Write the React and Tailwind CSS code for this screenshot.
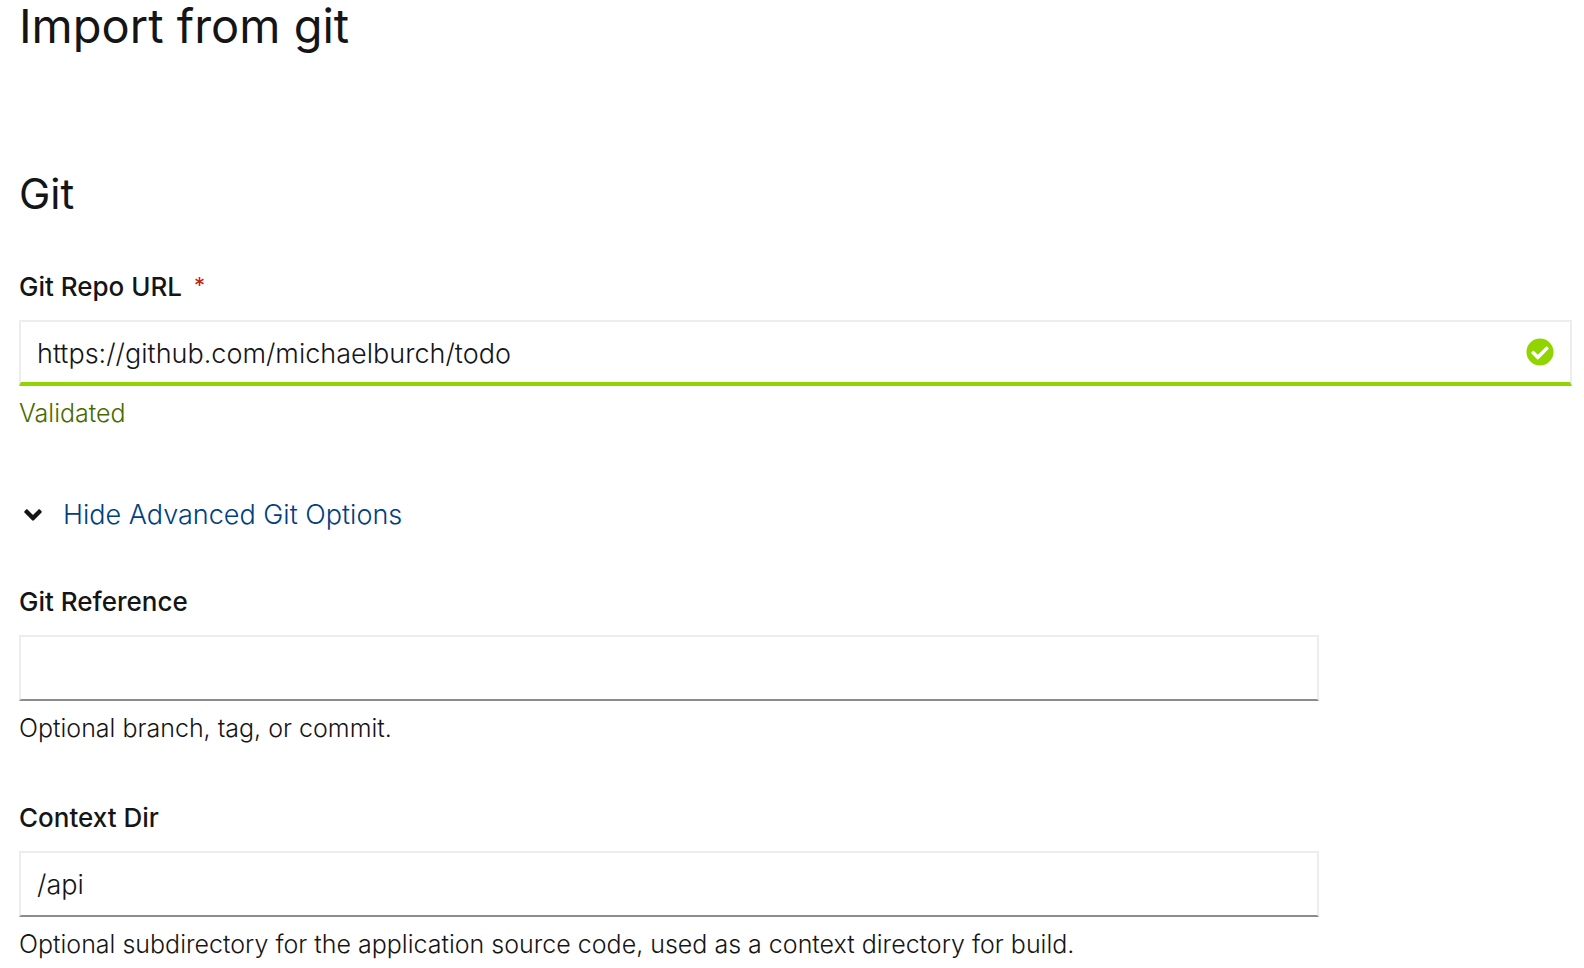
import React, { useState } from 'react'
import { FaAngleDown, FaAngleRight, FaCheckCircle } from 'react-icons/fa'

const inputBase =
  'block h-[66px] w-full rounded-none border-2 border-[#ededed] bg-white text-[27px] leading-10 font-light text-[#151515] outline-none'

function Field({ id, label, required, helper, valid, value, onChange }) {
  return (
    <div>
      <label htmlFor={id} className="mb-[15px] flex text-[26px] leading-9 font-medium">
        {label}
        {required && (
          <span aria-hidden="true" className="ml-3 text-[22px] leading-8 font-normal text-[#c9190b]">
            *
          </span>
        )}
      </label>
      <div className="relative">
        <input
          id={id}
          type="text"
          required={required}
          aria-describedby={`${id}-helper`}
          value={value}
          onChange={(event) => onChange(event.target.value)}
          className={
            valid
              ? `${inputBase} border-b-4 border-b-[#92d400] pt-0.5 pr-16 pl-4`
              : `${inputBase} border-b-[#8a8d90] px-4`
          }
        />
        {valid && (
          <FaCheckCircle
            aria-hidden="true"
            className="absolute top-[18px] right-[18px] size-7 text-[#92d400]"
          />
        )}
      </div>
      <p
        id={`${id}-helper`}
        className={
          valid
            ? 'mt-[7px] text-[25px] leading-10 text-[#486b00]'
            : 'mt-[7px] text-[25px] leading-10'
        }
      >
        {helper}
      </p>
    </div>
  )
}

export default function App() {
  const [url, setUrl] = useState('https://github.com/michaelburch/todo')
  const [reference, setReference] = useState('')
  const [contextDir, setContextDir] = useState('/api')
  const [open, setOpen] = useState(true)

  return (
    <main className="bg-white pr-3 pl-[19px] font-['Inter','Open_Sans',sans-serif] font-light text-[#151515]">
      <h1 className="text-[47px] leading-[52px] font-normal">Import from git</h1>
      <form onSubmit={(event) => event.preventDefault()}>
        <h2 className="mt-[118px] mb-[51px] text-[42px] leading-[48px] font-normal">Git</h2>
        <Field
          id="git-url"
          label="Git Repo URL"
          required
          valid
          helper="Validated"
          value={url}
          onChange={setUrl}
        />
        <button
          type="button"
          aria-expanded={open}
          onClick={() => setOpen(!open)}
          className="mt-[62px] flex items-center gap-4 text-[27px] leading-10 text-[#004080]"
        >
          {open ? (
            <FaAngleDown aria-hidden="true" className="size-7 text-[#151515]" />
          ) : (
            <FaAngleRight aria-hidden="true" className="size-7 text-[#151515]" />
          )}
          {open ? 'Hide Advanced Git Options' : 'Show Advanced Git Options'}
        </button>
        {open && (
          <div className="mt-[49px] flex max-w-[1300px] flex-col gap-[52px]">
            <Field
              id="git-reference"
              label="Git Reference"
              helper="Optional branch, tag, or commit."
              value={reference}
              onChange={setReference}
            />
            <Field
              id="context-dir"
              label="Context Dir"
              helper="Optional subdirectory for the application source code, used as a context directory for build."
              value={contextDir}
              onChange={setContextDir}
            />
          </div>
        )}
      </form>
    </main>
  )
}
